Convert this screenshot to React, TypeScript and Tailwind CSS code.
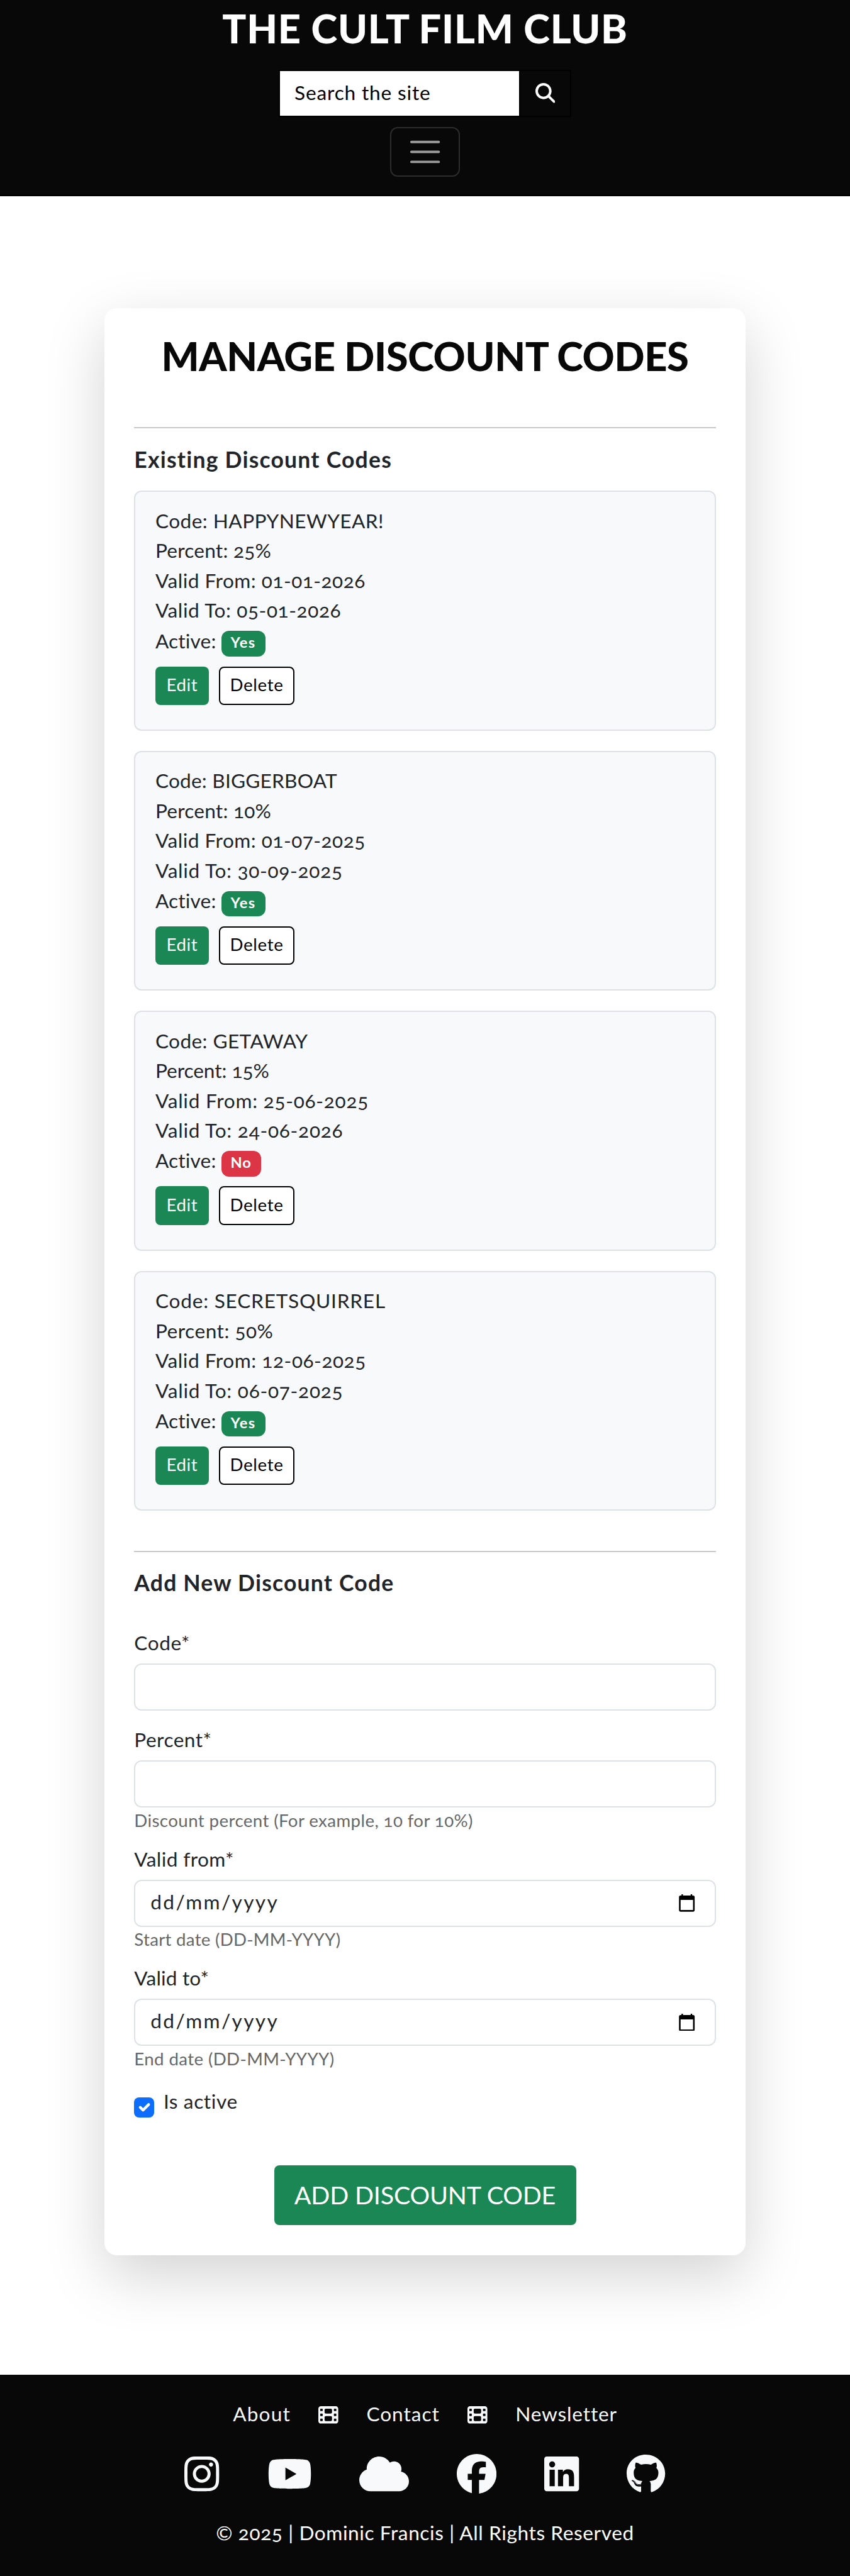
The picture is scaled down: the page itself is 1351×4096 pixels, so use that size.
import React from 'react'
import {
  FaCloud,
  FaFacebook,
  FaFilm,
  FaGithub,
  FaInstagram,
  FaLinkedin,
  FaMagnifyingGlass,
  FaYoutube,
} from 'react-icons/fa6'

type Line = { text: string; tracking: string }

type Discount = {
  lines: Line[]
  active: boolean
}

const discounts: Discount[] = [
  {
    lines: [
      { text: 'Code: HAPPYNEWYEAR!', tracking: 'tracking-[0.0145em]' },
      { text: 'Percent: 25%', tracking: 'tracking-[0.0075em]' },
      { text: 'Valid From: 01-01-2026', tracking: 'tracking-[0.016em]' },
      { text: 'Valid To: 05-01-2026', tracking: 'tracking-[0.019em]' },
    ],
    active: true,
  },
  {
    lines: [
      { text: 'Code: BIGGERBOAT', tracking: 'tracking-[0.007em]' },
      { text: 'Percent: 10%', tracking: 'tracking-[0.0075em]' },
      { text: 'Valid From: 01-07-2025', tracking: 'tracking-[0.016em]' },
      { text: 'Valid To: 30-09-2025', tracking: 'tracking-[0.023em]' },
    ],
    active: true,
  },
  {
    lines: [
      { text: 'Code: GETAWAY', tracking: 'tracking-[0.013em]' },
      { text: 'Percent: 15%', tracking: 'tracking-[-0.0011em]' },
      { text: 'Valid From: 25-06-2025', tracking: 'tracking-[0.0235em]' },
      { text: 'Valid To: 24-06-2026', tracking: 'tracking-[0.024em]' },
    ],
    active: false,
  },
  {
    lines: [
      { text: 'Code: SECRETSQUIRREL', tracking: 'tracking-[0.025em]' },
      { text: 'Percent: 50%', tracking: 'tracking-[0.0165em]' },
      { text: 'Valid From: 12-06-2025', tracking: 'tracking-[0.0175em]' },
      { text: 'Valid To: 06-07-2025', tracking: 'tracking-[0.024em]' },
    ],
    active: true,
  },
]

function Header() {
  return (
    <header className="flex h-[312px] flex-col items-center border-b-2 border-black bg-[#080808] pt-[6.6px]">
      <h1 className="text-[63.2px] leading-[76px] font-black tracking-[0.0115em] whitespace-nowrap text-white">
        THE CULT FILM CLUB
      </h1>
      <form className="mt-7 flex h-[75px] w-[465px] border-2 border-black">
        <div className="flex flex-1 items-center bg-white pb-[1.4px] pl-[23px] text-[31.6px] tracking-[0.0265em] text-black">
          Search the site
        </div>
        <button
          type="button"
          aria-label="Search"
          className="flex w-[81px] items-center justify-center border-l-2 border-black text-white"
        >
          <FaMagnifyingGlass className="size-[31.6px]" />
        </button>
      </form>
      <button
        type="button"
        aria-label="Menu"
        className="mt-4 flex h-[79px] w-[111px] items-center justify-center rounded-[12px] border-2 border-white/15"
      >
        <svg viewBox="0 0 30 30" className="size-[59.2px]" fill="none">
          <path
            d="M4 7h22M4 15h22M4 23h22"
            stroke="rgba(255,255,255,0.6)"
            strokeWidth="2"
            strokeLinecap="round"
            strokeMiterlimit="10"
          />
        </svg>
      </button>
    </header>
  )
}

function DiscountCard({ discount }: { discount: Discount }) {
  return (
    <article className="h-[381.4px] rounded-[12px] border-2 border-[#dee2e6] bg-[#f8f9fb] pt-[22.6px] pl-[31.6px]">
      {discount.lines.map((line) => (
        <p key={line.text} className={`leading-[47.4px] whitespace-nowrap ${line.tracking}`}>
          {line.text}
        </p>
      ))}
      <div className="flex h-[65px] items-start">
        <span className="w-[104.7px] pt-px leading-[47.4px] tracking-[0.0056em]">Active:</span>
        {discount.active ? (
          <span className="mt-[8.7px] flex h-[40.4px] w-[70px] items-center justify-center rounded-[12px] bg-[#1a8754] pb-[3px] text-[23.7px] font-bold tracking-[0.06em] text-white">
            Yes
          </span>
        ) : (
          <span className="mt-[8.7px] flex h-[40.4px] w-[63px] items-center justify-center rounded-[12px] bg-[#dc3545] pb-[3px] text-[23.7px] font-bold tracking-[0.03em] text-white">
            No
          </span>
        )}
      </div>
      <div className="flex gap-[15.8px] text-[27.65px]">
        <button
          type="button"
          className="flex h-[61.2px] w-[85px] items-center justify-center rounded-[8px] bg-[#1a8754] pb-[3px] tracking-[0.0233em] text-white"
        >
          Edit
        </button>
        <button
          type="button"
          className="flex h-[61.2px] w-[120.5px] items-center justify-center rounded-[8px] border-2 border-black bg-white pb-[3px] tracking-[0.0254em] text-black"
        >
          Delete
        </button>
      </div>
    </article>
  )
}

function CalendarIcon() {
  return (
    <svg viewBox="0 0 25.6 28" className="h-[27.7px] w-[25.3px]">
      <path
        fill="#000"
        fillRule="evenodd"
        d="M4.2 0h2.4v2h12.4V0h2.4v2h1.4a2.6 2.6 0 0 1 2.6 2.6v20.8a2.6 2.6 0 0 1-2.6 2.6H2.8a2.6 2.6 0 0 1-2.6-2.6V4.6A2.6 2.6 0 0 1 2.8 2h1.4ZM2.8 9v16.4h20V9Z"
      />
    </svg>
  )
}

function DateInput() {
  return (
    <div className="mt-[8.6px] flex h-[75px] items-center justify-between rounded-[12px] border-2 border-[#dee2e6] bg-white pr-[31px] pl-[24px]">
      <span className="pb-[2.6px] tracking-[0.075em]">dd/mm/yyyy</span>
      <CalendarIcon />
    </div>
  )
}

function TextInput() {
  return (
    <input
      type="text"
      className="mt-[8.6px] block h-[75px] w-full rounded-[12px] border-2 border-[#dee2e6] bg-white px-6"
    />
  )
}

function AddForm() {
  return (
    <form className="mt-[51.5px] flex flex-col">
      <label className="leading-[47.4px] tracking-[0.0188em]">Code*</label>
      <TextInput />

      <label className="mt-[23px] leading-[47.4px] tracking-[0.0152em]">Percent*</label>
      <TextInput />
      <p className="pt-[0.6px] text-[27.65px] leading-[39px] tracking-[0.0148em] text-[#666768]">
        Discount percent (For example, 10 for 10%)
      </p>

      <label className="mt-[18.7px] leading-[47.4px] tracking-[0.0128em]">Valid from*</label>
      <DateInput />
      <p className="pt-[0.6px] text-[27.65px] leading-[39px] tracking-[0.0101em] text-[#666768]">
        Start date (DD-MM-YYYY)
      </p>

      <label className="mt-[18.7px] leading-[47.4px] tracking-[0.0056em]">Valid to*</label>
      <DateInput />
      <p className="pt-[0.6px] text-[27.65px] leading-[39px] tracking-[0.0141em] text-[#666768]">
        End date (DD-MM-YYYY)
      </p>

      <label className="mt-[25.6px] flex items-start gap-[15px]">
        <span className="mt-[16.8px] flex size-[31.6px] items-center justify-center rounded-[8px] bg-[#0d6efd]">
          <svg viewBox="0 0 20 20" className="size-[29.6px]" fill="none">
            <path
              d="m6 10 3 3 6-6"
              stroke="#fff"
              strokeWidth="3"
              strokeLinecap="round"
              strokeLinejoin="round"
            />
          </svg>
        </span>
        <span className="pt-[0.3px] leading-[47.4px] tracking-[0.0191em]">Is active</span>
      </label>

      <button
        type="button"
        className="mt-[76.6px] flex h-[94.8px] w-[480px] items-center justify-center self-center rounded-[8px] bg-[#1a8754] pb-[2.4px] text-[39.5px] tracking-[-0.0049em] whitespace-nowrap text-white"
      >
        ADD DISCOUNT CODE
      </button>
    </form>
  )
}

function Footer() {
  return (
    <footer className="flex h-[319.8px] flex-col items-center bg-[#080808] text-[#f8f9fa]">
      <nav className="mt-[38.4px] flex h-[47.4px] items-center gap-[44.4px] leading-[47.4px]">
        <a className="tracking-[0.038em]">About</a>
        <FaFilm className="mt-[3px] size-[31.6px]" />
        <a className="tracking-[0.031em]">Contact</a>
        <FaFilm className="mt-[3px] size-[31.6px]" />
        <a className="tracking-[0.0265em]">Newsletter</a>
      </nav>
      <div className="mt-[40.4px] flex gap-[75.8px]">
        <FaInstagram className="h-[63.2px] w-[55.3px]" />
        <FaYoutube className="h-[63.2px] w-[71.1px]" />
        <FaCloud className="h-[63.2px] w-[79px]" />
        <FaFacebook className="h-[63.2px] w-[63.2px]" />
        <FaLinkedin className="h-[63.2px] w-[55.3px]" />
        <FaGithub className="h-[63.2px] w-[61.2px]" />
      </div>
      <p className="mt-[38.7px] leading-[47.4px] tracking-[0.019em] whitespace-nowrap text-white">
        © 2025 | Dominic Francis | All Rights Reserved
      </p>
    </footer>
  )
}

export default function App() {
  return (
    <div className="flex h-[4096px] w-[1351px] flex-col overflow-hidden bg-white font-['Lato',sans-serif] text-[31.6px] text-[#212529] [font-variant-numeric:oldstyle-nums]">
      <Header />
      <main className="h-[3464.2px] pt-[177.8px]">
        <section className="mx-auto h-[3096.7px] w-[1019.2px] rounded-[20px] bg-white px-[47.4px] pt-[38.2px] shadow-[0_31.6px_94.8px_rgba(0,0,0,0.175)]">
          <h2 className="text-center text-[63.2px] leading-[76px] font-black tracking-[-0.0056em] whitespace-nowrap text-[#080808]">
            MANAGE DISCOUNT CODES
          </h2>
          <div className="mt-[75.4px] h-[2px] bg-[#c8c9ca]" />
          <h3 className="mt-[28px] text-[35.5px] leading-[43px] font-bold tracking-[0.0345em]">
            Existing Discount Codes
          </h3>
          <div className="mt-[28px] flex flex-col gap-[32.05px]">
            {discounts.map((discount) => (
              <DiscountCard key={discount.lines[0].text} discount={discount} />
            ))}
          </div>
          <div className="mt-[63.5px] h-[2px] bg-[#c8c9ca]" />
          <h3 className="mt-[27.3px] text-[35.5px] leading-[43px] font-bold tracking-[0.034em]">
            Add New Discount Code
          </h3>
          <AddForm />
        </section>
      </main>
      <Footer />
    </div>
  )
}
